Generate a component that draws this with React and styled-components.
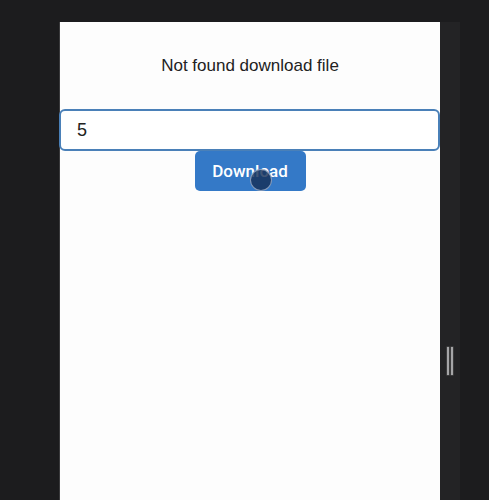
import React from "react";
import styled, { createGlobalStyle } from "styled-components";

const Global = createGlobalStyle`
  html, body { margin: 0; padding: 0; background: #1c1c1e; height: 100%; overflow: hidden; }
  #root { height: 100%; }
  * { box-sizing: border-box; }
`;

const Stage = styled.div`
  display: flex;
  height: 500px;
  background: #1c1c1e;
  padding-top: 22px;
`;

const LeftGutter = styled.div`
  width: 59px;
  flex: none;
`;

const Panel = styled.main`
  position: relative;
  width: 381px;
  flex: none;
  background: #fdfdfd;
  border-left: 1px solid #3a3a3c;
  display: flex;
  flex-direction: column;
  align-items: center;
  font-family: "Liberation Sans", Arial, sans-serif;
`;

const Title = styled.h1`
  margin: 35px 0 0;
  height: 18px;
  font-size: 17px;
  line-height: 18px;
  font-weight: 400;
  color: #222;
`;

const Input = styled.input`
  margin-top: 34px;
  width: 381px;
  margin-left: -1px;
  height: 42px;
  border: 2px solid #4a80b8;
  border-radius: 6px;
  padding: 0 16px;
  font-family: inherit;
  font-size: 18px;
  color: #222;
  background: #fff;
  outline: none;
`;

const Button = styled.button`
  position: relative;
  width: 111px;
  height: 40px;
  border: none;
  border-radius: 5px;
  background: #3479c7;
  color: #fff;
  font-family: Roboto, "Liberation Sans", sans-serif;
  font-size: 17px;
  font-weight: 500;
  cursor: pointer;
  padding: 0;
`;

const TouchDot = styled.span`
  position: absolute;
  left: 55px;
  top: 18px;
  width: 22px;
  height: 22px;
  border-radius: 50%;
  background: rgba(22, 48, 88, 0.82);
  border: 1.5px solid rgba(190, 205, 225, 0.65);
  pointer-events: none;
`;

const SideStrip = styled.aside`
  width: 20px;
  flex: none;
  background: #232325;
  display: flex;
  align-items: center;
  justify-content: center;
`;

const Handle = styled.div`
  display: flex;
  gap: 2px;
  margin-top: 200px;
`;

const HandleBar = styled.span`
  width: 2px;
  height: 28px;
  background: #a5a5a7;
  box-shadow: 0 0 0 0.5px #555;
`;

export default function App() {
  return (
    <>
      <Global />
      <Stage>
        <LeftGutter />
        <Panel>
          <Title>Not found download file</Title>
          <Input defaultValue="5" />
          <Button>
            Download
            <TouchDot />
          </Button>
        </Panel>
        <SideStrip>
          <Handle>
            <HandleBar />
            <HandleBar />
          </Handle>
        </SideStrip>
      </Stage>
    </>
  );
}
